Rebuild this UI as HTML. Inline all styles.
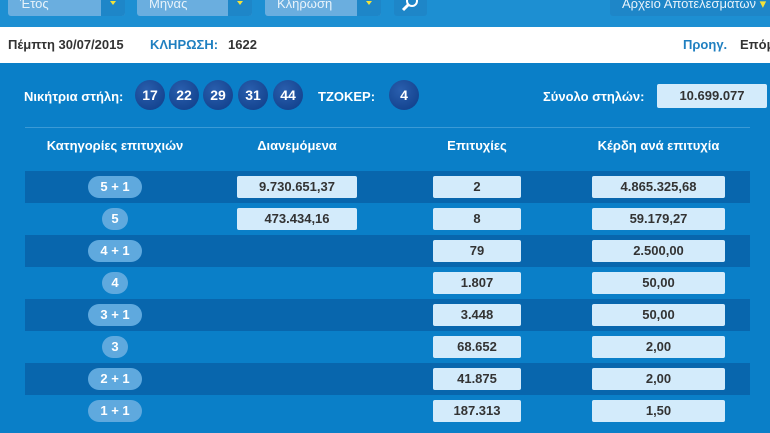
<!DOCTYPE html>
<html><head><meta charset="utf-8"><style>
*{margin:0;padding:0;box-sizing:border-box}
body{width:770px;height:433px;overflow:hidden;background:#0a7fc8;font-family:"Liberation Sans Narrow","Liberation Sans",sans-serif;font-weight:bold;position:relative}
.a{position:absolute}
.top{left:0;top:0;width:770px;height:27px;background:#1d8fd2}
.sel{top:-4px;height:20px;background:#6aaedf;border-radius:0 0 3px 3px;color:#e8f3fb;font-size:13px;font-weight:normal;padding:0 12px;line-height:16px}
.arr{top:-4px;width:24px;height:20px;background:#1e86c8;border-radius:0 0 3px 0}
.arr:after{content:"";position:absolute;left:9px;top:5px;border:3px solid transparent;border-top:4px solid #f2e23b}
.white{left:0;top:27px;width:770px;height:36px;background:#fff;font-size:13px;line-height:36px}
.ball{top:80px;width:30px;height:30px;border-radius:50%;background:radial-gradient(circle at 40% 35%,#2a5fae,#0d3b86);color:#fff;font-size:14px;text-align:center;line-height:30px}
.lbl{color:#fff;font-size:13px}
.row{left:25px;width:725px;height:32px}
.dk{background:#0866ad}
.pill{height:22px;border-radius:11px;background:#5fa9de;color:#fff;font-size:13px;text-align:center;line-height:22px}
.box{height:22px;background:#d3ebfb;color:#333;font-size:13px;text-align:center;line-height:22px;border-radius:2px}
.hd{top:138px;color:#fff;font-size:13px;text-align:center}
</style></head><body>
<div class="a top"></div>
<div class="a sel" style="left:8px;width:117px">Έτος</div><div class="a arr" style="left:101px"></div>
<div class="a sel" style="left:137px;width:115px">Μήνας</div><div class="a arr" style="left:228px"></div>
<div class="a sel" style="left:265px;width:116px">Κλήρωση</div><div class="a arr" style="left:357px"></div>
<div class="a" style="left:394px;top:-4px;width:33px;height:20px;background:#1e86c8;border-radius:0 0 3px 3px">
<svg width="33" height="20"><circle cx="18" cy="5" r="5" fill="none" stroke="#fff" stroke-width="2"/><line x1="14" y1="9" x2="9" y2="14" stroke="#fff" stroke-width="3"/></svg></div>
<div class="a sel" style="left:610px;width:170px;background:#1e86c8">Αρχείο Αποτελεσμάτων <span style="color:#f2e23b">▾</span></div>
<div class="a white"><span class="a" style="left:8px;color:#333">Πέμπτη 30/07/2015</span><span class="a" style="left:150px;color:#1f7fc0">ΚΛΗΡΩΣΗ:</span><span class="a" style="left:228px;color:#333">1622</span><span class="a" style="left:683px;color:#1f7fc0">Προηγ.</span><span class="a" style="left:740px;color:#333">Επόμ</span></div>
<div class="a lbl" style="left:24px;top:89px">Νικήτρια στήλη:</div>
<div class="a ball" style="left:135px">17</div><div class="a ball" style="left:169px">22</div><div class="a ball" style="left:203px">29</div><div class="a ball" style="left:238px">31</div><div class="a ball" style="left:273px">44</div>
<div class="a lbl" style="left:318px;top:89px">ΤΖΟΚΕΡ:</div>
<div class="a ball" style="left:389px">4</div>
<div class="a lbl" style="left:543px;top:89px">Σύνολο στηλών:</div>
<div class="a box" style="left:657px;top:84px;width:110px;height:24px;line-height:24px">10.699.077</div>
<div class="a" style="left:25px;top:127px;width:725px;height:1px;background:#3b9ad6"></div>
<div class="a hd" style="left:25px;width:180px">Κατηγορίες επιτυχιών</div>
<div class="a hd" style="left:237px;width:120px">Διανεμόμενα</div>
<div class="a hd" style="left:433px;width:88px">Επιτυχίες</div>
<div class="a hd" style="left:592px;width:133px">Κέρδη ανά επιτυχία</div>
<div id="rows"></div>
<script>
var d=[["5 + 1","9.730.651,37","2","4.865.325,68"],["5","473.434,16","8","59.179,27"],["4 + 1","","79","2.500,00"],["4","","1.807","50,00"],["3 + 1","","3.448","50,00"],["3","","68.652","2,00"],["2 + 1","","41.875","2,00"],["1 + 1","","187.313","1,50"]];
var h="";d.forEach(function(r,i){var y=171+i*32;
h+='<div class="a row'+(i%2==0?' dk':'')+'" style="top:'+y+'px"></div>';
var w=r[0].length>1?54:26;
h+='<div class="a pill" style="left:'+(115-w/2)+'px;top:'+(y+5)+'px;width:'+w+'px">'+r[0]+'</div>';
if(r[1])h+='<div class="a box" style="left:237px;top:'+(y+5)+'px;width:120px">'+r[1]+'</div>';
h+='<div class="a box" style="left:433px;top:'+(y+5)+'px;width:88px">'+r[2]+'</div>';
h+='<div class="a box" style="left:592px;top:'+(y+5)+'px;width:133px">'+r[3]+'</div>';});
document.getElementById("rows").innerHTML=h;
</script>
</body></html>
